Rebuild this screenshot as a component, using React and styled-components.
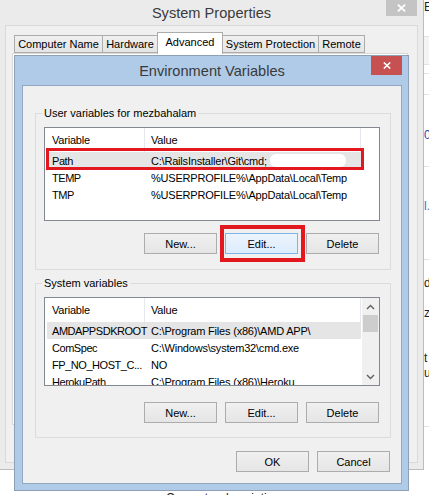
import React from "react";
import styled, { createGlobalStyle } from "styled-components";

const ui = `"Liberation Sans", Arial, sans-serif`;

const GlobalStyle = createGlobalStyle`
  html, body { margin: 0; padding: 0; background: #ffffff; }
  body { font-family: ${ui}; font-size: 11px; color: #000; }
  *, *::before, *::after { box-sizing: border-box; }
`;

const Desktop = styled.div`
  position: relative;
  width: 429px;
  height: 495px;
  overflow: hidden;
  background: #ffffff;
`;

/* ---------- window peeking out on the right ---------- */
const SideWindow = styled.div`
  position: absolute;
  left: 424px;
  top: 0;
  width: 60px;
  height: 495px;
  display: flex;
  flex-direction: column;
  background: #ffffff;
  font-size: 12px;
`;

const SideRow = styled.div`
  height: ${(p) => p.$h}px;
  flex: none;
  padding-top: ${(p) => p.$pt || 0}px;
  background: ${(p) => p.$bg || "transparent"};
  border-bottom: ${(p) => (p.$line ? "1px solid #e3e3e3" : "none")};
  color: ${(p) => p.$c || "#222"};
  line-height: 15px;
  white-space: pre;
`;

const StrayText = styled.div`
  position: absolute;
  left: 166px;
  top: 491px;
  font-size: 12px;
  color: #222;
`;

/* ---------- System Properties (behind) ---------- */
const SysWindow = styled.div`
  position: absolute;
  left: 0;
  top: 0;
  width: 424px;
  height: 470px;
  background: #ebebeb;
  border-right: 1px solid #bcbcbc;
  border-bottom: 1px solid #bcbcbc;
  display: flex;
  flex-direction: column;
  padding: 0 5px 6px 5px;
`;

const TitleBar = styled.div`
  position: relative;
  height: ${(p) => p.$h}px;
  flex: none;
  display: flex;
  align-items: center;
  justify-content: center;
  font-family: ${ui};
  font-size: 14.6px;
  color: #3a3a3a;
`;

const CloseBtn = styled.div`
  position: absolute;
  top: 0;
  right: ${(p) => p.$r}px;
  width: 31px;
  height: ${(p) => p.$h}px;
  background: ${(p) => p.$bg};
  display: flex;
  align-items: center;
  justify-content: center;
`;

const XMark = ({ s = 8 }) => (
  <svg width={s} height={s - 1} viewBox="0 0 8 7">
    <path d="M0.8 0.5 L7.2 6.5 M7.2 0.5 L0.8 6.5" stroke="#fff" strokeWidth="1.6" fill="none" />
  </svg>
);

const SysClient = styled.div`
  flex: 1;
  background: #f0f0f0;
  border: 1px solid #d9d9d9;
  padding: 7px 9px 0 6px;
  display: flex;
  flex-direction: column;
`;

const TabStrip = styled.div`
  height: 20px;
  display: flex;
  align-items: flex-end;
  padding-left: 2px;
  position: relative;
  z-index: 1;
`;

const Tab = styled.div`
  width: ${(p) => p.$w}px;
  height: ${(p) => (p.$on ? 22 : 18)}px;
  margin-left: ${(p) => (p.$first ? 0 : -1)}px;
  margin-bottom: ${(p) => (p.$on ? -1 : 0)}px;
  border: 1px solid #acacac;
  border-bottom: ${(p) => (p.$on ? "none" : "1px solid #acacac")};
  background: ${(p) => (p.$on ? "#ffffff" : "linear-gradient(#f0f0f0, #e5e5e5)")};
  display: flex;
  align-items: center;
  justify-content: center;
  padding-bottom: ${(p) => (p.$on ? 3 : 0)}px;
  position: relative;
  z-index: ${(p) => (p.$on ? 2 : 1)};
  white-space: nowrap;
  font-size: 11px;
  color: #000;
`;

const TabPanel = styled.div`
  height: 372px;
  flex: none;
  background: #ffffff;
  border: 1px solid #d9d9d9;
`;

/* ---------- Environment Variables dialog ---------- */
const Dialog = styled.div`
  position: absolute;
  left: 14px;
  top: 55px;
  width: 395px;
  height: 436px;
  background: #afcbe8;
  border: 1px solid #8da0b6;
  display: flex;
  flex-direction: column;
  padding: 0 6px 6px 7px;
`;

const DialogClient = styled.div`
  flex: 1;
  background: #f0f0f0;
  border: 1px solid #93a8c0;
  padding: 0 10px 0 12px;
  display: flex;
  flex-direction: column;
`;

const Group = styled.fieldset`
  margin: ${(p) => p.$mt}px 0 0 0;
  padding: 7px 10px ${(p) => p.$pb}px 8px;
  border: 1px solid #dcdcdc;
  min-width: 0;
`;

const GroupLabel = styled.legend`
  padding: 0 2px;
  margin-left: -2px;
  line-height: 14px;
  font-size: 11px;
  color: #000;
`;

const ListBox = styled.div`
  position: relative;
  height: ${(p) => p.$h}px;
  border: 1px solid #828790;
  background: #ffffff;
  display: flex;
  letter-spacing: -0.2px;
`;

const ListMain = styled.div`
  flex: 1;
  min-width: 0;
  display: flex;
  flex-direction: column;
  overflow: hidden;
`;

const Header = styled.div`
  height: 24px;
  flex: none;
  display: flex;
`;

const HeadCell = styled.div`
  width: ${(p) => p.$w}px;
  flex: none;
  padding-left: ${(p) => p.$pl}px;
  border-right: 1px solid #e5e8ef;
  display: flex;
  align-items: center;
  color: #000;
  white-space: nowrap;
`;

const Row = styled.div`
  position: relative;
  width: 314px;
  height: 17px;
  flex: none;
  margin-left: 2px;
  display: flex;
  align-items: center;
  white-space: nowrap;
  background: ${(p) => (p.$sel ? "#e5e5e5" : "transparent")};

  ${(p) =>
    p.$marked &&
    `&::after {
      content: "";
      position: absolute;
      left: -1px;
      right: -3px;
      top: -4px;
      bottom: -1px;
      border: 3px solid #e3171e;
    }`}
`;

const NameCell = styled.div`
  width: 97px;
  flex: none;
  padding-left: 5px;
  letter-spacing: -0.45px;
  white-space: nowrap;
`;

const ValueCell = styled.div`
  flex: 1;
  padding-left: 7px;
  display: flex;
  align-items: center;
`;

const Smudge = styled.span`
  display: inline-block;
  width: 76px;
  height: 13px;
  margin-left: 3px;
  background: #ffffff;
  border-radius: 6px;
  filter: blur(0.6px);
`;

const ScrollBar = styled.div`
  width: 17px;
  flex: none;
  background: #f0f0f0;
  display: flex;
  flex-direction: column;
`;

const ScrollArrow = styled.div`
  height: 17px;
  flex: none;
  display: flex;
  align-items: center;
  justify-content: center;
`;

const ScrollTrack = styled.div`
  flex: 1;
  padding: 0 1px;
`;

const Thumb = styled.div`
  height: 17px;
  background: #cdcdcd;
`;

const Chevron = ({ up }) => (
  <svg width="9" height="6" viewBox="0 0 9 6">
    <path
      d={up ? "M1 5 L4.5 1.5 L8 5" : "M1 1 L4.5 4.5 L8 1"}
      stroke="#606060"
      strokeWidth="1.4"
      fill="none"
    />
  </svg>
);

const ButtonRow = styled.div`
  display: flex;
  justify-content: flex-end;
  gap: 8px;
  margin-top: ${(p) => p.$mt}px;
  padding-right: ${(p) => p.$pr}px;
`;

const Button = styled.div`
  position: relative;
  width: 73px;
  height: 21px;
  border: 1px solid ${(p) => (p.$focus ? "#7eb4ea" : "#acacac")};
  background: ${(p) =>
    p.$focus ? "linear-gradient(#ecf4fc, #dcecfc)" : "linear-gradient(#f0f0f0, #e5e5e5)"};
  display: flex;
  align-items: center;
  justify-content: center;
  font-size: 11px;
  color: #000;

  ${(p) =>
    p.$marked &&
    `&::after {
      content: "";
      position: absolute;
      left: -6px;
      right: -8px;
      top: -9px;
      bottom: -9px;
      border: 4px solid #e3171e;
      z-index: 2;
    }`}
`;

const userVars = [
  { name: "Path", value: "C:\\RailsInstaller\\Git\\cmd;", sel: true, marked: true, smudge: true },
  { name: "TEMP", value: "%USERPROFILE%\\AppData\\Local\\Temp" },
  { name: "TMP", value: "%USERPROFILE%\\AppData\\Local\\Temp" },
];

const sysVars = [
  { name: "AMDAPPSDKROOT", value: "C:\\Program Files (x86)\\AMD APP\\", sel: true },
  { name: "ComSpec", value: "C:\\Windows\\system32\\cmd.exe" },
  { name: "FP_NO_HOST_C...", value: "NO" },
  { name: "HerokuPath", value: "C:\\Program Files (x86)\\Heroku" },
];

const VarList = ({ rows, height, scroll }) => (
  <ListBox $h={height}>
    <ListMain>
      <Header>
        <HeadCell $w={100} $pl={7}>Variable</HeadCell>
        <HeadCell $w={216} $pl={6}>Value</HeadCell>
      </Header>
      {rows.map((r) => (
        <Row key={r.name} $sel={r.sel} $marked={r.marked}>
          <NameCell>{r.name}</NameCell>
          <ValueCell>
            {r.value}
            {r.smudge && <Smudge />}
          </ValueCell>
        </Row>
      ))}
    </ListMain>
    {scroll && (
      <ScrollBar>
        <ScrollArrow>
          <Chevron up />
        </ScrollArrow>
        <ScrollTrack>
          <Thumb />
        </ScrollTrack>
        <ScrollArrow>
          <Chevron />
        </ScrollArrow>
      </ScrollBar>
    )}
  </ListBox>
);

const tabs = [
  { label: "Computer Name", w: 89 },
  { label: "Hardware", w: 56 },
  { label: "Advanced", w: 66, on: true },
  { label: "System Protection", w: 97 },
  { label: "Remote", w: 47 },
];

const sideRows = [
  { h: 37, t: "E", line: true },
  { h: 28, bg: "#f4f4f4", line: true },
  { h: 9, line: true },
  { h: 21, line: true },
  { h: 72, t: "0", c: "#2747b0", pt: 33, line: true },
  { h: 93, t: "l.", c: "#2f6fd0", pt: 32, line: true },
  { h: 167, t: "d\n\nz\n\n\nt\nu", pt: 16, line: true },
  { h: 68 },
];

export default function App() {
  return (
    <Desktop>
      <GlobalStyle />

      <SideWindow>
        {sideRows.map((r, i) => (
          <SideRow key={i} $h={r.h} $pt={r.pt} $bg={r.bg} $c={r.c} $line={r.line}>
            {r.t}
          </SideRow>
        ))}
      </SideWindow>

      <StrayText>Computer description</StrayText>

      <SysWindow>
        <TitleBar $h={25}>
          System Properties
          <CloseBtn $r={1} $h={16} $bg="#c4c4c4">
            <XMark s={9} />
          </CloseBtn>
        </TitleBar>
        <SysClient>
          <TabStrip>
            {tabs.map((t, i) => (
              <Tab key={t.label} $w={t.w} $on={t.on} $first={i === 0}>
                {t.label}
              </Tab>
            ))}
          </TabStrip>
          <TabPanel />
        </SysClient>
      </SysWindow>

      <Dialog>
        <TitleBar $h={29}>
          Environment Variables
          <CloseBtn $r={0} $h={19} $bg="#c75050">
            <XMark />
          </CloseBtn>
        </TitleBar>
        <DialogClient>
          <Group $mt={20} $pb={15}>
            <GroupLabel>User variables for mezbahalam</GroupLabel>
            <VarList rows={userVars} height={94} />
            <ButtonRow $mt={12} $pr={1}>
              <Button>New...</Button>
              <Button $focus $marked>
                Edit...
              </Button>
              <Button>Delete</Button>
            </ButtonRow>
          </Group>
          <Group $mt={6} $pb={14}>
            <GroupLabel>System variables</GroupLabel>
            <VarList rows={sysVars} height={89} scroll />
            <ButtonRow $mt={16} $pr={1}>
              <Button>New...</Button>
              <Button>Edit...</Button>
              <Button>Delete</Button>
            </ButtonRow>
          </Group>
          <ButtonRow $mt={13} $pr={1}>
            <Button>OK</Button>
            <Button>Cancel</Button>
          </ButtonRow>
        </DialogClient>
      </Dialog>
    </Desktop>
  );
}
